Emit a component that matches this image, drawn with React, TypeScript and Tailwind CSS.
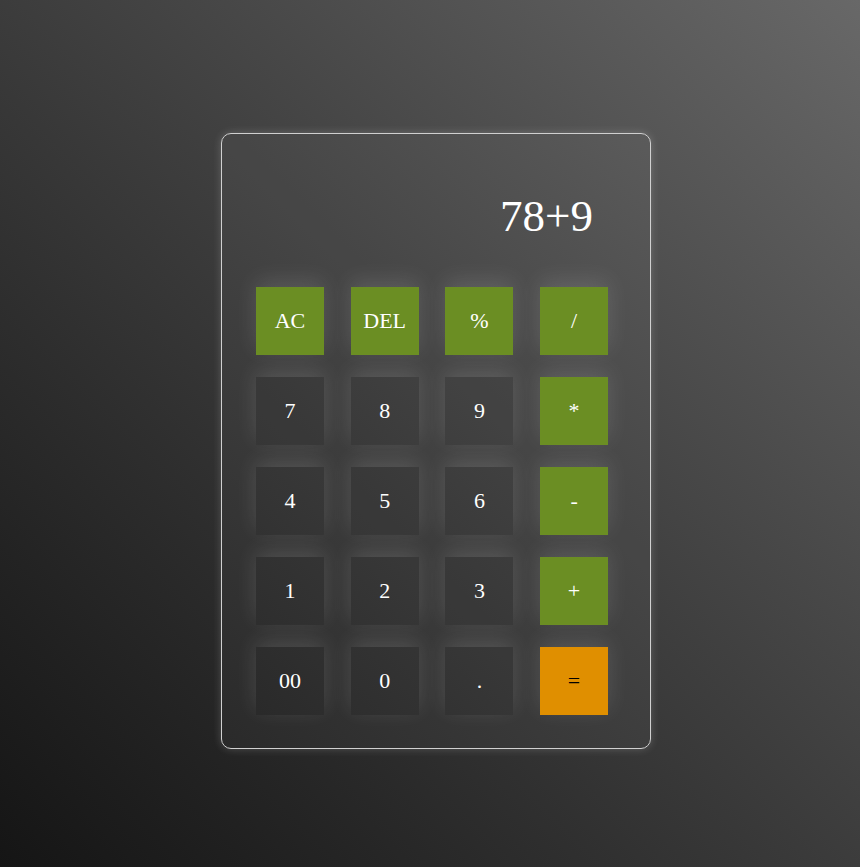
import React from "react";

type Key = { label: string; kind: "op" | "num" | "eq" };

const keys: Key[] = [
  { label: "AC", kind: "op" },
  { label: "DEL", kind: "op" },
  { label: "%", kind: "op" },
  { label: "/", kind: "op" },
  { label: "7", kind: "num" },
  { label: "8", kind: "num" },
  { label: "9", kind: "num" },
  { label: "*", kind: "op" },
  { label: "4", kind: "num" },
  { label: "5", kind: "num" },
  { label: "6", kind: "num" },
  { label: "-", kind: "op" },
  { label: "1", kind: "num" },
  { label: "2", kind: "num" },
  { label: "3", kind: "num" },
  { label: "+", kind: "op" },
  { label: "00", kind: "num" },
  { label: "0", kind: "num" },
  { label: ".", kind: "num" },
  { label: "=", kind: "eq" },
];

export default function App() {
  return (
    <div
      className="w-[860px] h-[867px] bg-gradient-to-tr from-[#151515] to-[#686868] pt-[133px] pl-[221px]"
      style={{ fontFamily: '"Liberation Serif", "Times New Roman", serif' }}
    >
      <div className="w-[430px] h-[616px] border border-[#d0d0d0] rounded-[10px] bg-white/[0.03] shadow-[0_0_8px_rgba(255,255,255,0.2)] flex flex-col">
        <div className="pt-[60px] pr-[57px] text-right text-white text-[45px] leading-none">
          78+9
        </div>
        <div className="mt-[48px] ml-[34px] grid grid-cols-[68px_68px_68px_68px] gap-x-[26.7px] gap-y-[22px]">
          {keys.map((k) => (
            <button
              key={k.label}
              className={
                "w-[68px] h-[68px] flex items-center justify-center text-[22px] leading-none shadow-[0_-6px_22px_rgba(255,255,255,0.13)] " +
                (k.kind === "op"
                  ? "bg-[#6b8e23] text-white"
                  : k.kind === "eq"
                  ? "bg-[#e08f00] text-black"
                  : "bg-black/[0.05] text-white")
              }
              style={{ fontFamily: '"Liberation Serif", "Times New Roman", serif' }}
            >
              {k.label}
            </button>
          ))}
        </div>
      </div>
    </div>
  );
}
